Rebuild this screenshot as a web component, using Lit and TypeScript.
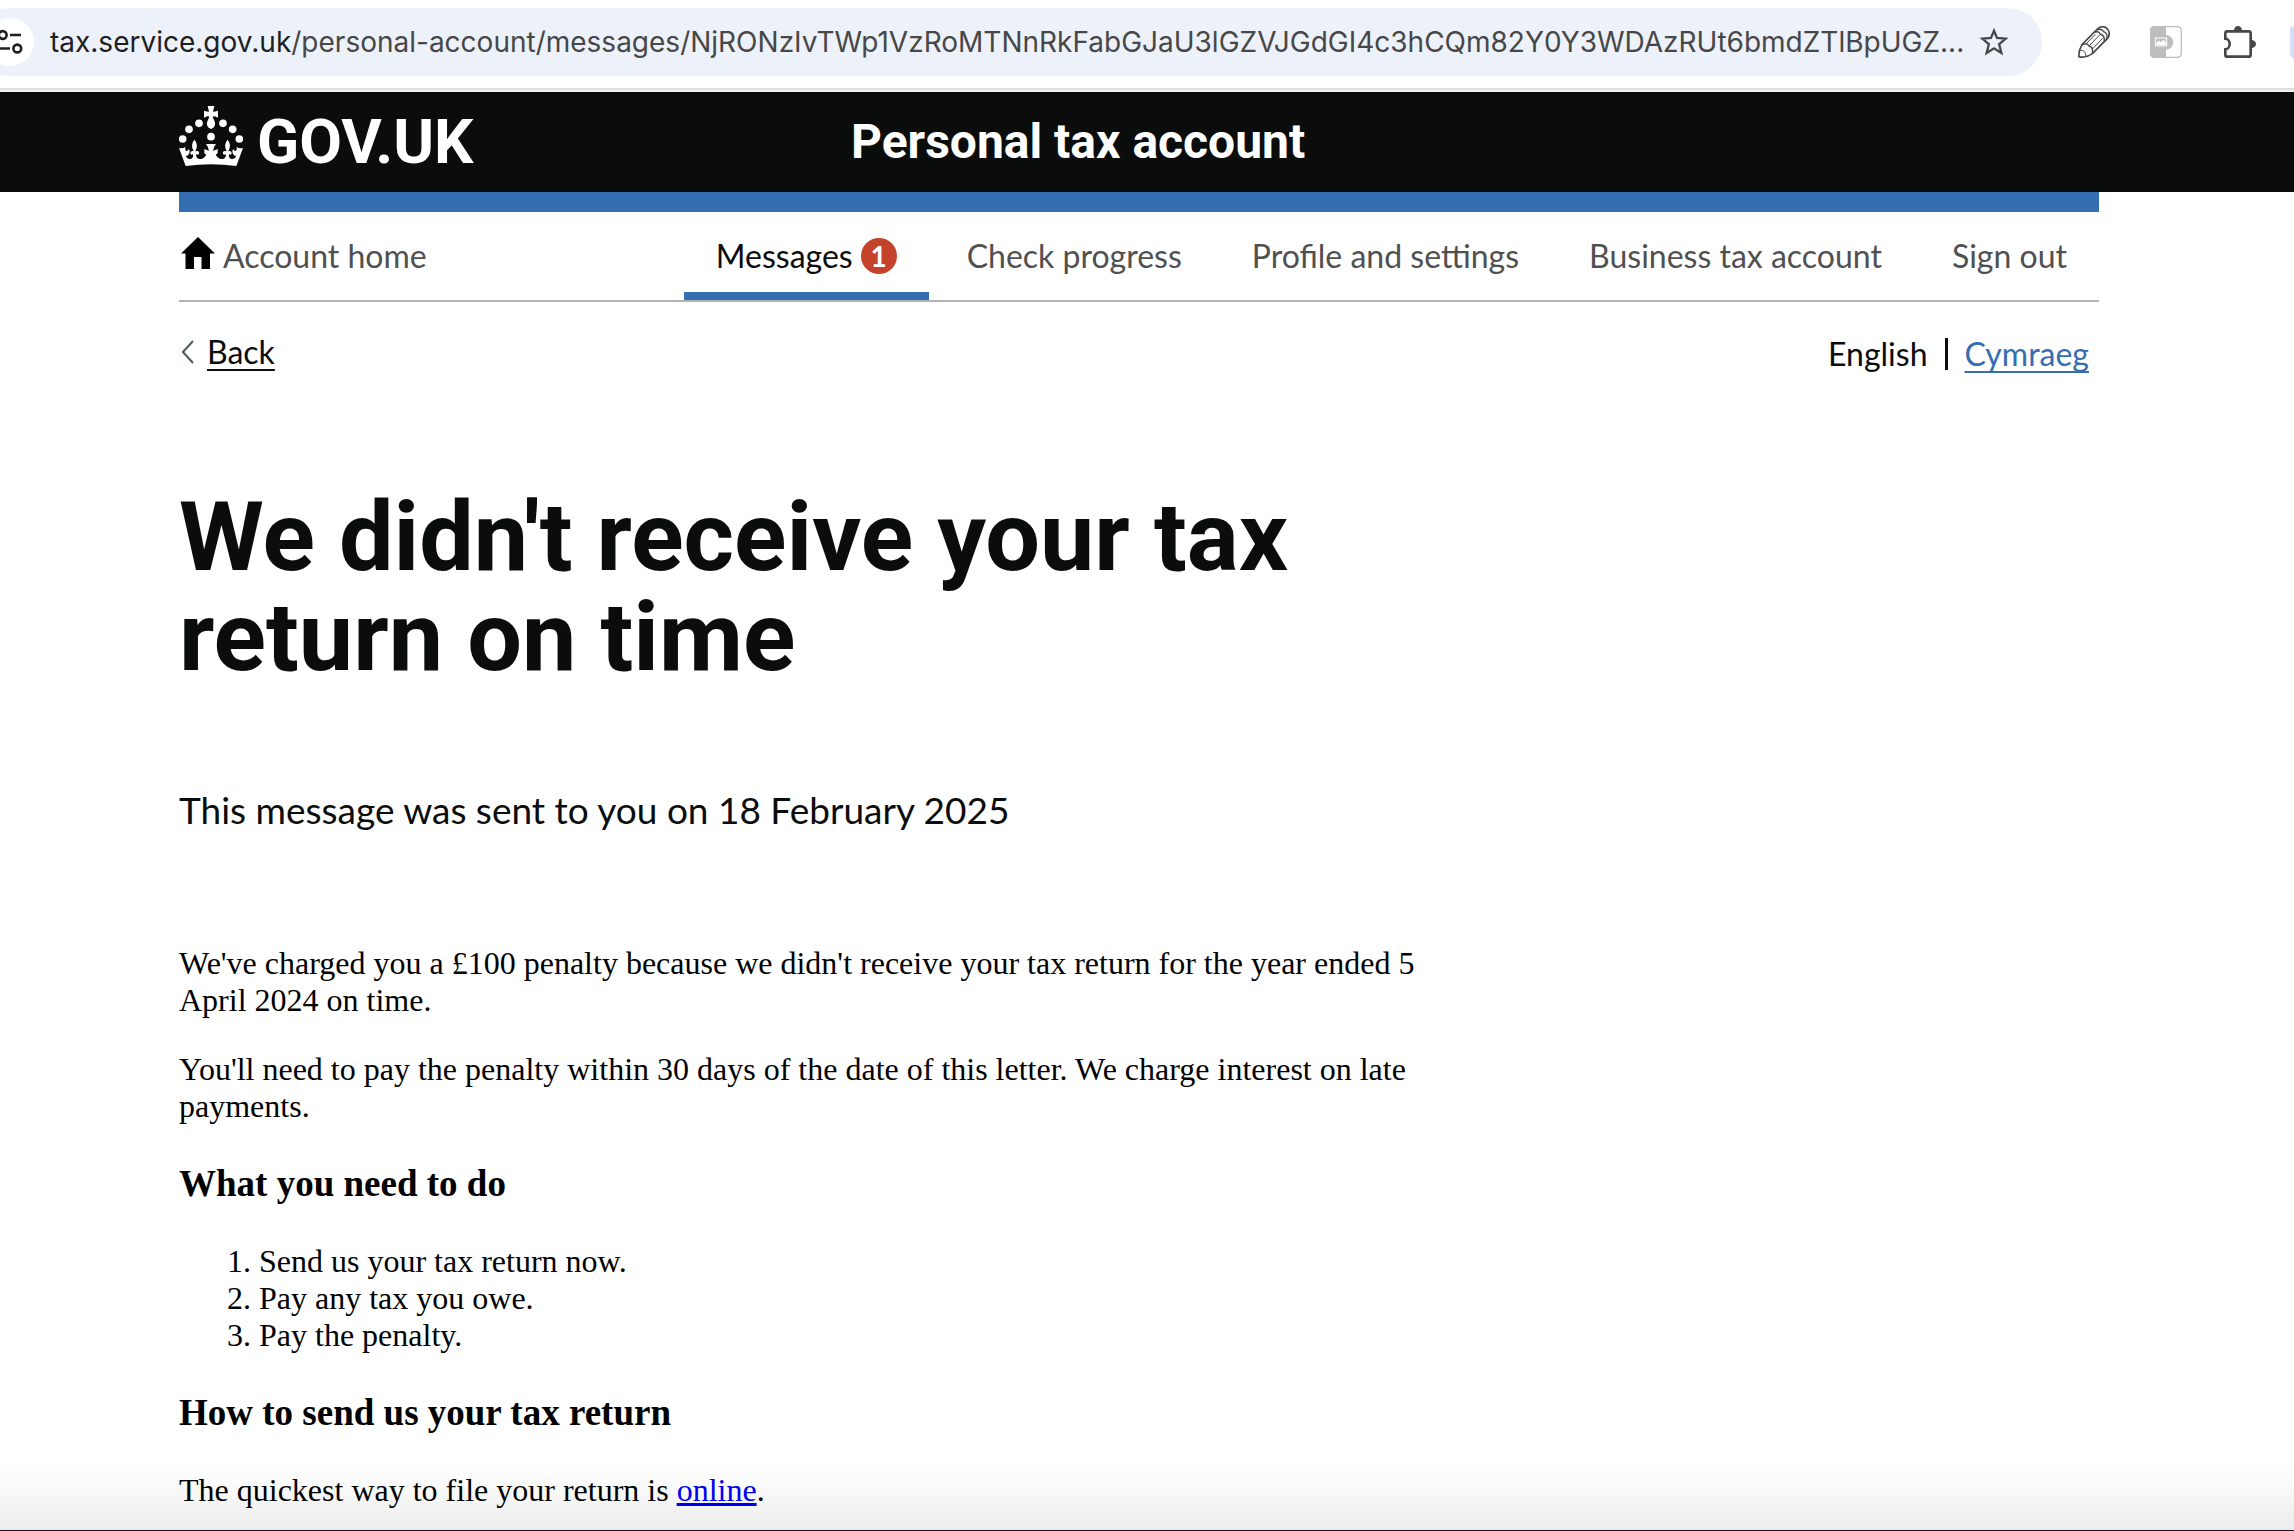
import { LitElement, html, css } from "lit";
import { customElement, property } from "lit/decorators.js";
import { classMap } from "lit/directives/class-map.js";

interface NavItem {
  label: string;
  count?: number;
  current?: boolean;
}

const NAV_ITEMS: NavItem[] = [
  { label: "Messages", count: 1, current: true },
  { label: "Check progress" },
  { label: "Profile and settings" },
  { label: "Business tax account" },
  { label: "Sign out" },
];

const STEPS = ["Send us your tax return now.", "Pay any tax you owe.", "Pay the penalty."];

@customElement("browser-bar")
class BrowserBar extends LitElement {
  @property() host = "";
  @property() path = "";

  static styles = css`
    :host {
      display: block;
      overflow: hidden;
      background: #fff;
      border-bottom: 2px solid #f2f0f0;
    }
    .bar {
      display: flex;
      align-items: center;
      padding: 8px 0 12px;
      border-bottom: 2px solid #dfdfdf;
    }
    .address {
      flex: 1;
      min-width: 0;
      display: flex;
      align-items: center;
      justify-content: space-between;
      height: 68px;
      box-sizing: border-box;
      margin-left: -24px;
      padding: 0 32px 0 10px;
      border-radius: 34px;
      background: #edf2fa;
    }
    button {
      flex: none;
      display: block;
      margin: 0;
      padding: 0;
      border: 0;
      background: none;
      color: #474747;
    }
    svg {
      display: block;
    }
    .site {
      width: 48px;
      height: 48px;
      margin-right: 16px;
      border-radius: 50%;
      background: #fff;
      color: #1f1f1f;
    }
    .url {
      flex: 1;
      min-width: 0;
      overflow: hidden;
      white-space: nowrap;
      font: 28px/40px Inter, "Liberation Sans", sans-serif;
      color: #474747;
      text-decoration: none;
    }
    .domain {
      color: #1f1f1f;
    }
    .tools {
      flex: none;
      display: flex;
      align-items: center;
      gap: 40px;
      margin-left: 36px;
    }
    .avatar {
      width: 4px;
      height: 32px;
      margin-left: -6px;
      border-radius: 4px 0 0 4px;
      background: #d3e0fb;
    }
  `;

  render() {
    return html`
      <div class="bar">
        <div class="address">
          <button class="site" aria-label="View site information">
            <svg width="48" height="48" viewBox="-14 18 48 48" fill="none" stroke="currentColor" stroke-width="2.6">
              <circle cx="2.7" cy="35" r="3.9" />
              <path d="M10 35h11M-3 48.5h13" />
              <circle cx="17.3" cy="48.5" r="3.9" />
            </svg>
          </button>
          <a class="url" href="#"><span class="domain">${this.host}</span>${this.path}</a>
          <button aria-label="Bookmark this tab">
            <svg width="32" height="30" viewBox="54 80 96 90" fill="none" stroke="currentColor" stroke-width="7">
              <path d="M102 91L111 112.500L137 115L117.500 131.500L124 158L102 144L80 158L86.500 131.500L67 115L93 112.500Z" />
            </svg>
          </button>
        </div>
        <div class="tools">
          <button aria-label="Pencil extension">
            <svg width="32" height="32" viewBox="354 78 96 96" fill="none" stroke="currentColor" stroke-linejoin="round">
              <path stroke-width="5" d="M357 171Q355 152 366 134L409 90Q423 75 438 83Q452 94 446 109Q444 114 439 119L397 161Q379 174 357 171Z" />
              <path stroke-width="4" d="M366 135Q381 127 387 138Q401 141 397 160M401 98Q416 91 421 102Q436 107 432 125M409 90Q425 84 431 95Q445 100 440 117" />
              <path stroke-width="3" d="M387 138L421 103M377 133L406 103M396 148L428 115" />
              <path stroke-width="3" d="M360 151Q376 149 378 168" />
            </svg>
          </button>
          <button aria-label="Picture extension">
            <svg width="32" height="32" viewBox="570 78 96 96">
              <rect x="572" y="80" width="92" height="92" rx="12" fill="#fff" stroke="#bdbdbd" stroke-width="4" />
              <path fill="#bdbdbd" d="M618 78H584Q570 78 570 92V160Q570 174 584 174H618ZM618 105a22 22 0 0 1 0 44Z" />
              <rect x="586" y="114" width="34" height="24" fill="#bdbdbd" stroke="#fff" stroke-width="3" />
              <path fill="#fff" d="M589 136V128L597 122L603 127L611 119L617 126V136Z" />
            </svg>
          </button>
          <button aria-label="Extensions">
            <svg width="34" height="32" viewBox="786 72 102 96">
              <path fill="none" stroke="currentColor" stroke-width="8" d="M796 94q0-6 6-6H866q6 0 6 6V158q0 6-6 6H802q-6 0-6-6V142a13 16 0 0 0 0-32Z" />
              <path fill="currentColor" d="M822 86a12 14 0 0 1 24 0ZM874 114a14 12 0 0 1 0 24Z" />
            </svg>
          </button>
          <div class="avatar"></div>
        </div>
      </div>
    `;
  }
}

@customElement("service-header")
class ServiceHeader extends LitElement {
  static styles = css`
    :host {
      display: block;
      padding-right: 16px;
      background: #0b0c0c;
      color: #fff;
      font-family: Roboto, "Liberation Sans", sans-serif;
      font-weight: 700;
    }
    .inner {
      display: flex;
      align-items: center;
      box-sizing: border-box;
      min-height: 100px;
      max-width: 1920px;
      margin: 0 auto;
    }
    a {
      color: inherit;
      text-decoration: none;
    }
    .logo {
      flex: 0 0 35%;
      display: flex;
      align-items: center;
      gap: 14px;
      font-size: 62px;
      line-height: 72px;
    }
    .crown {
      display: block;
      margin-bottom: 12px;
    }
    .service {
      font-size: 48px;
      line-height: 60px;
    }
  `;

  render() {
    return html`
      <header class="inner">
        <a class="logo" href="#">
          <svg class="crown" width="64" height="60" viewBox="57 48 192 180" fill="#fff" aria-hidden="true">
            <path d="M143 48H163L159 65Q166 65 174 62V83Q166 79 159 79Q158 84 162 90Q170 104 160 113L153 117L146 113Q136 104 144 90Q148 84 147 79Q140 79 132 83V62Q140 65 147 65Z" />
            <circle cx="117" cy="100" r="11.500" />
            <circle cx="87" cy="118" r="11.500" />
            <circle cx="68" cy="147" r="11.500" />
            <circle cx="189" cy="100" r="11.500" />
            <circle cx="218" cy="118" r="11.500" />
            <circle cx="238" cy="147" r="11.500" />
            <circle cx="153" cy="140" r="11.500" />
            <path d="M57 174Q67 177 76 171Q74 179 78 182Q83 185 86 177Q92 184 86 193Q84 199 77 197Q83 210 94 206Q102 202 98 192Q93 197 91 190Q90 184 97 183L101 184Q90 164 103 149Q117 164 106 184L111 183Q119 184 117 191Q114 197 109 192Q106 203 117 207Q130 209 139 194L133 190V177Q140 180 147 182Q145 170 138 162H168Q161 170 159 182Q166 180 173 177V190L167 194Q176 209 189 207Q200 203 197 192Q192 197 189 191Q187 184 195 183L200 184Q189 164 203 149Q216 164 205 184L209 183Q216 184 215 190Q213 197 208 192Q204 202 212 206Q223 210 229 197Q222 199 220 193Q214 184 220 177Q223 185 228 182Q232 179 230 171Q239 177 249 174L229 228Q153 218 77 228Z" />
          </svg>
          <span>GOV.UK</span>
        </a>
        <a class="service" href="#">Personal tax account</a>
      </header>
    `;
  }
}

@customElement("account-nav")
class AccountNav extends LitElement {
  static styles = css`
    :host {
      display: block;
      border-top: 20px solid #366eb2;
      border-bottom: 2px solid #b3b3b3;
      font: 32px/40px Lato, "Liberation Sans", sans-serif;
    }
    nav {
      display: flex;
      justify-content: space-between;
    }
    a {
      display: flex;
      align-items: center;
      gap: 8px;
      box-sizing: border-box;
      height: 88px;
      padding: 14px 32px 6px;
      border-bottom: 8px solid transparent;
      color: #505050;
      text-decoration: none;
    }
    .home {
      padding-left: 2px;
    }
    .home svg {
      display: block;
      margin-bottom: 6px;
    }
    .items {
      display: flex;
      gap: 6px;
      margin: 0;
      padding: 0;
      list-style: none;
    }
    .current {
      border-bottom-color: #366eb2;
      color: #0b0c0c;
    }
    .count {
      width: 36px;
      height: 36px;
      border-radius: 50%;
      background: #c5432b;
      color: #fff;
      font: 700 28px/36px Lato, "Liberation Sans", sans-serif;
      text-align: center;
    }
  `;

  render() {
    return html`
      <nav aria-label="Account">
        <a class="home" href="#">
          <svg width="34" height="32" viewBox="0 0 34 32" fill="#000" aria-hidden="true">
            <path d="M17 0L34 16.500H29V32H20.500V20H13V32H4.500V16.500H0Z" />
          </svg>
          <span>Account home</span>
        </a>
        <ul class="items">
          ${NAV_ITEMS.map(
            (item) => html`
              <li>
                <a class=${classMap({ current: !!item.current })} href="#">
                  <span>${item.label}</span>
                  ${item.count ? html`<span class="count">${item.count}</span>` : ""}
                </a>
              </li>
            `
          )}
        </ul>
      </nav>
    `;
  }
}

@customElement("app-root")
class AppRoot extends LitElement {
  static styles = css`
    :host {
      display: block;
      box-sizing: border-box;
      min-height: 100vh;
      overflow: hidden;
      border-bottom: 1px solid #14182c;
      background: #fff linear-gradient(#fff, #fafafa 40%, #ebebeb) bottom / 100% 72px no-repeat;
      color: #0b0c0c;
      font: 32px/40px Lato, "Liberation Sans", sans-serif;
    }
    .gutter {
      padding-right: 16px;
    }
    .page {
      max-width: 1920px;
      margin: 0 auto;
    }
    .toprow {
      display: flex;
      justify-content: space-between;
      padding: 30px 10px 0 3px;
    }
    .back {
      display: flex;
      align-items: center;
      gap: 12px;
      height: 40px;
      color: inherit;
      text-decoration: none;
    }
    .back span,
    .welsh {
      text-decoration: underline;
      text-decoration-thickness: 2px;
      text-underline-offset: 5px;
      text-decoration-skip-ink: none;
    }
    .languages {
      display: flex;
      gap: 17px;
      padding-top: 2px;
    }
    .english {
      padding-right: 17px;
      border-right: 3px solid #0b0c0c;
      line-height: 32px;
      margin: 4px 0;
    }
    .welsh {
      color: #366eb2;
    }
    .column {
      max-width: 1260px;
    }
    h1 {
      margin: 113px 0 98px;
      font: 700 97px/100px Roboto, "Liberation Sans", sans-serif;
    }
    .sent {
      margin: 0 0 110px;
      font-size: 37px;
      line-height: 50px;
    }
    .letter {
      color: #000;
      font: 32px/37px "Liberation Serif", serif;
    }
    .letter p {
      margin: 0 0 32px;
    }
    .letter h2 {
      margin: 37px 0;
      font-size: 37px;
      line-height: 44px;
    }
    .letter ol {
      margin: 37px 0;
      padding-left: 80px;
    }
    .letter p:last-child {
      margin: 0;
    }
    .letter a {
      color: #0000ee;
    }
  `;

  render() {
    return html`
      <browser-bar
        host="tax.service.gov.uk"
        path="/personal-account/messages/NjRONzIvTWp1VzRoMTNnRkFabGJaU3lGZVJGdGI4c3hCQm82Y0Y3WDAzRUt6bmdZTlBpUGZ..."
      ></browser-bar>
      <service-header></service-header>
      <div class="gutter">
        <div class="page">
          <account-nav></account-nav>
          <div class="toprow">
            <a class="back" href="#">
              <svg width="13" height="24" viewBox="0 0 13 24" fill="none" stroke="#505a5f" stroke-width="2" aria-hidden="true">
                <path d="M11 1L1 12L11 23" />
              </svg>
              <span>Back</span>
            </a>
            <div class="languages">
              <span class="english">English</span>
              <a class="welsh" href="#" lang="cy">Cymraeg</a>
            </div>
          </div>
          <main class="column">
            <h1>We didn't receive your tax return on time</h1>
            <p class="sent">This message was sent to you on 18 February 2025</p>
            <article class="letter">
              <p>
                We've charged you a £100 penalty because we didn't receive your tax return for the year
                ended 5 April 2024 on time.
              </p>
              <p>
                You'll need to pay the penalty within 30 days of the date of this letter. We charge
                interest on late payments.
              </p>
              <h2>What you need to do</h2>
              <ol>
                ${STEPS.map((step) => html`<li>${step}</li>`)}
              </ol>
              <h2>How to send us your tax return</h2>
              <p>The quickest way to file your return is <a href="#">online</a>.</p>
            </article>
          </main>
        </div>
      </div>
    `;
  }
}
